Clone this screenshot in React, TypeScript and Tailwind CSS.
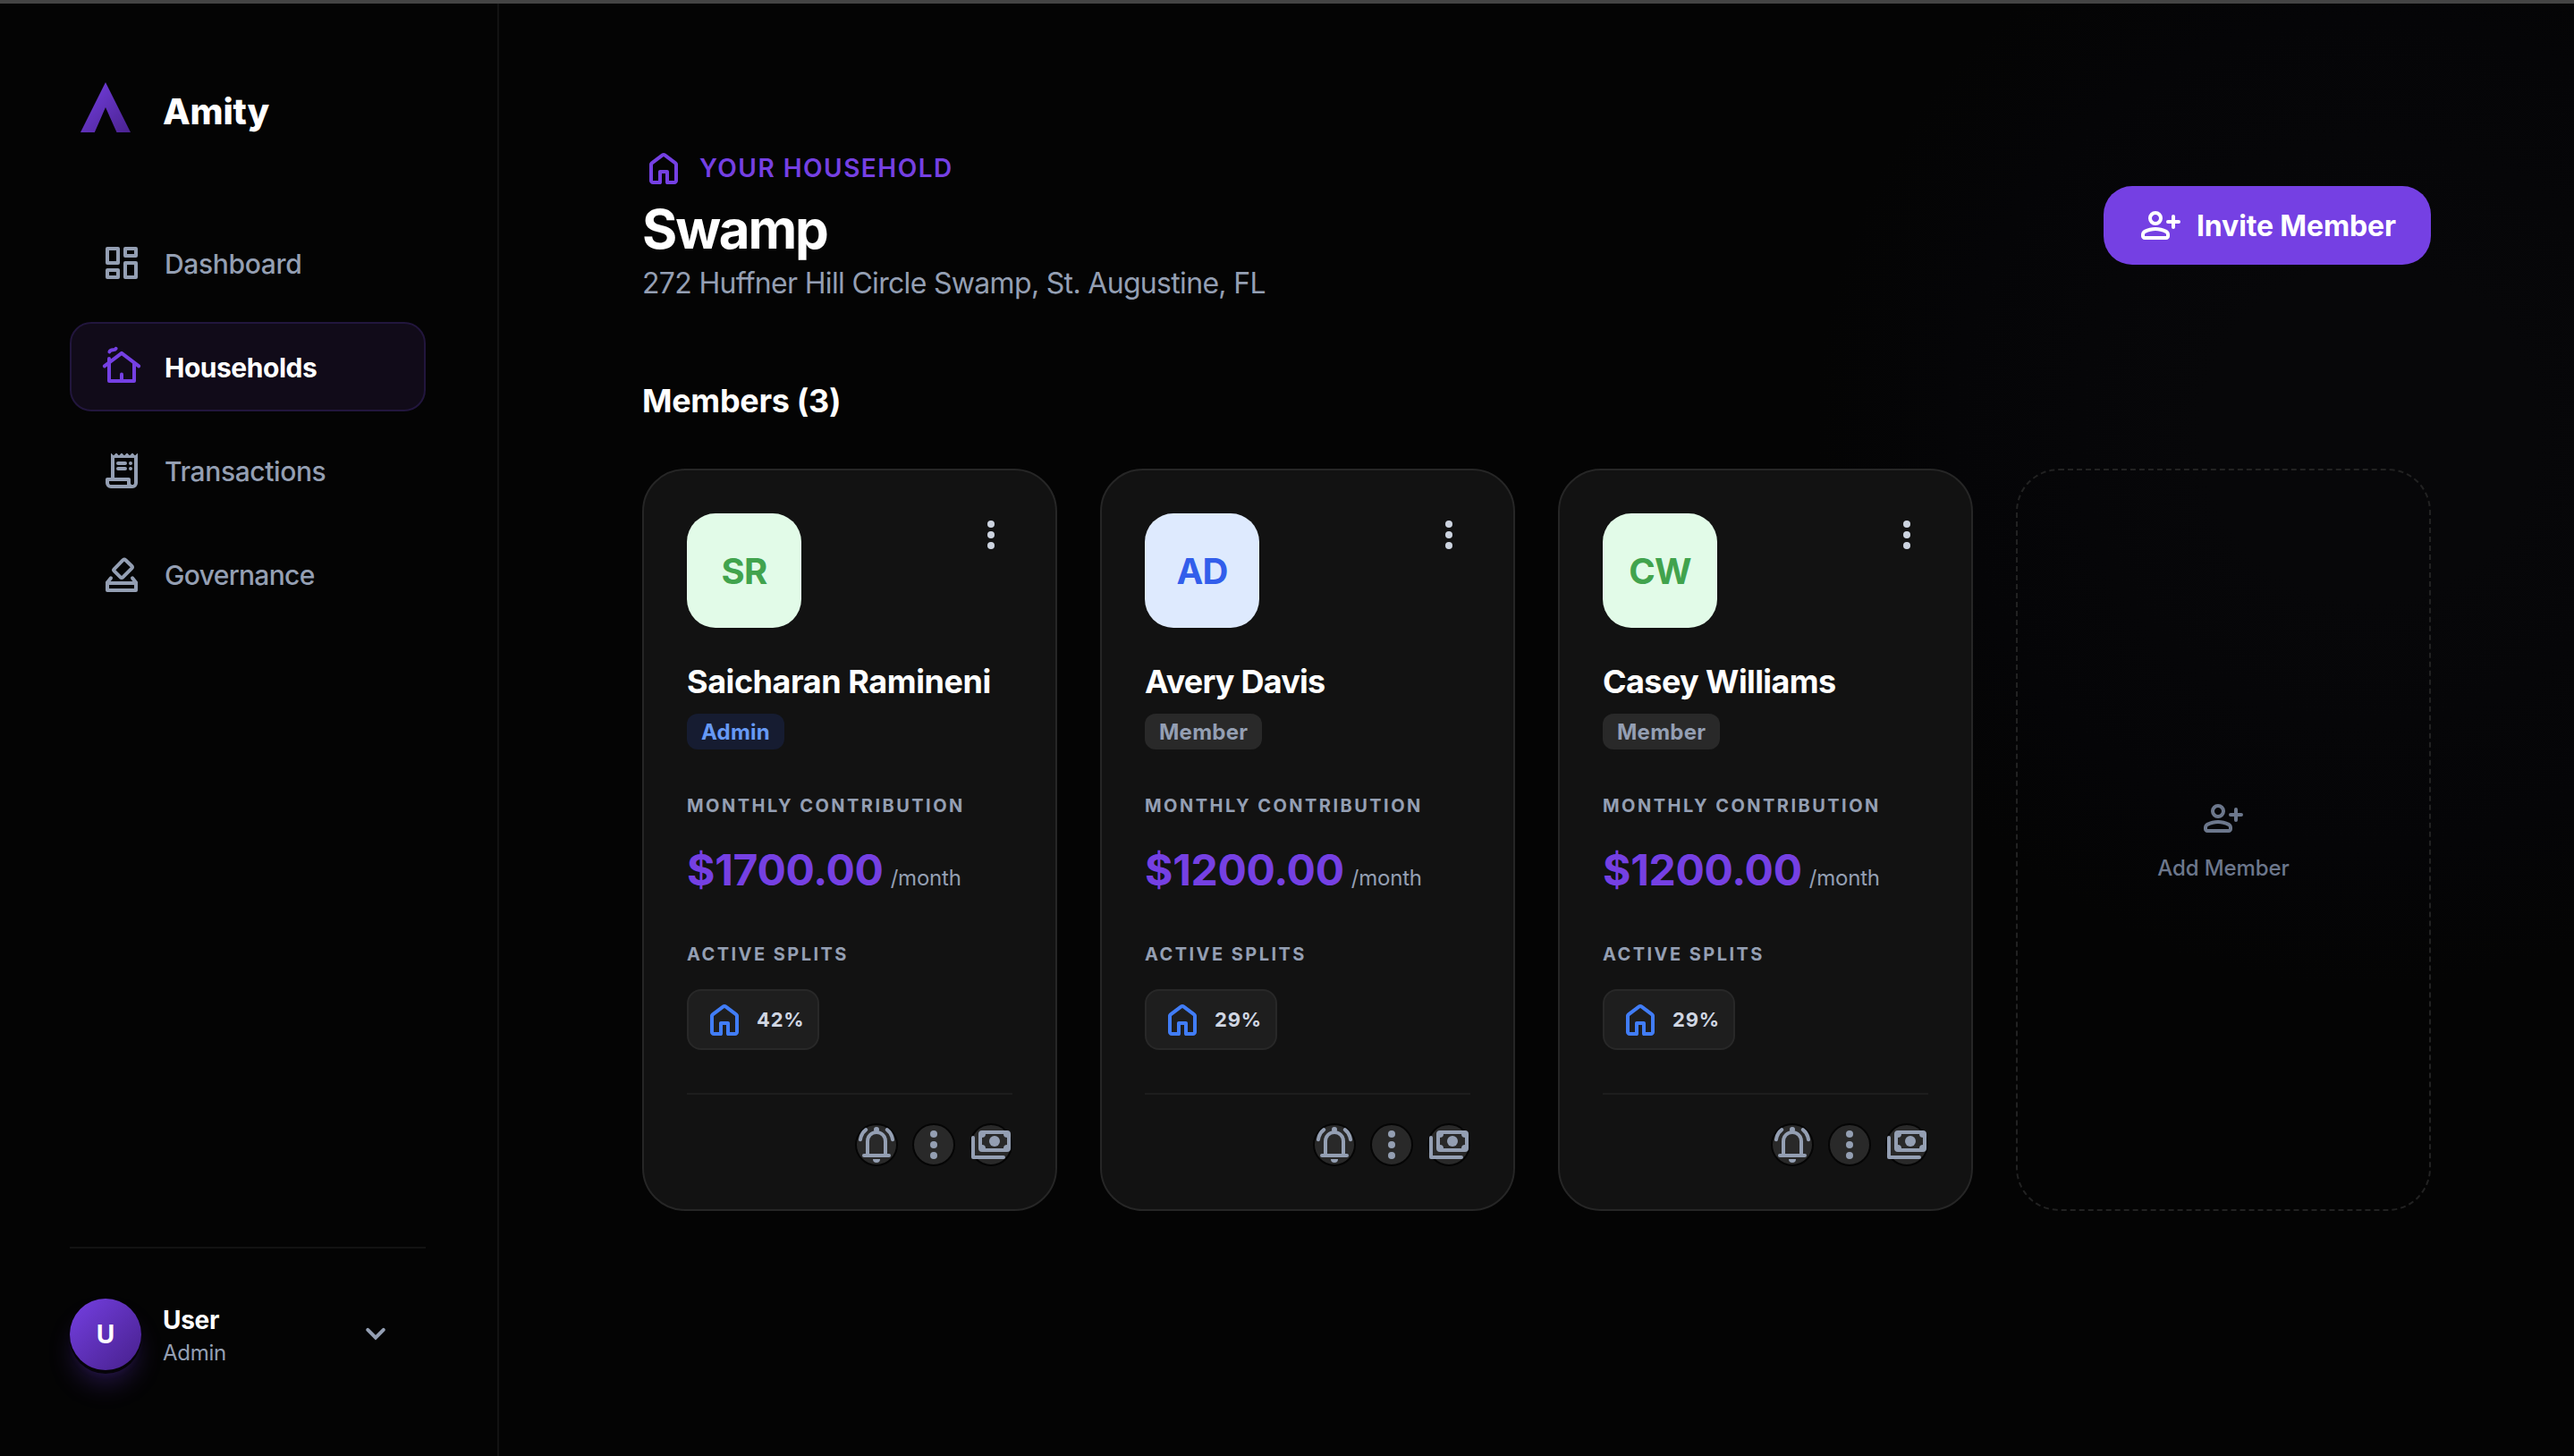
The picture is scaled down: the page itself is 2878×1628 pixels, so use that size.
import type { ReactNode } from "react";

function Icon({ children, className = "" }: { children: ReactNode; className?: string }) {
  return (
    <svg
      viewBox="0 0 24 24"
      fill="none"
      stroke="currentColor"
      strokeWidth="2"
      strokeLinecap="round"
      strokeLinejoin="round"
      className={`size-12 shrink-0 overflow-visible ${className}`}
    >
      {children}
    </svg>
  );
}

const DashboardIcon = () => (
  <Icon>
    <rect x="4" y="4" width="6" height="8" />
    <rect x="14" y="4" width="6" height="4" />
    <rect x="4" y="16" width="6" height="4" />
    <rect x="14" y="12" width="6" height="8" />
  </Icon>
);

const CottageIcon = () => (
  <Icon>
    <path d="M2.4 11.7 12 4.4l9.6 7.3" />
    <path d="M5 7.5V20h14v-9.6" />
    <path d="M12 16.3V20" />
    <path d="M5.2 3.7C5.9 1.9 8.1 3.3 8.8 1.9" />
  </Icon>
);

const ReceiptIcon = () => (
  <Icon>
    <path
      fill="currentColor"
      stroke="none"
      d="M6 22q-1.25 0-2.125-.875T3 19v-2q0-.425.288-.713T4 16h2V2.6q0-.3.25-.15l.9.9q.35.3.7 0l.8-.8q.35-.3.7 0l.8.8q.35.3.7 0l.8-.8q.35-.3.7 0l.8.8q.35.3.7 0l.8-.8q.35-.3.7 0l.8.8q.35.3.7 0l.8-.8q.35-.3.7 0l.8.8q.35.3.7 0l.9-.9q.25-.15.25.15V19q0 1.25-.875 2.125T18 22H6Zm12-2q.425 0 .713-.288T19 19V5H8v11h8q.425 0 .713.288T17 17v2q0 .425.288.713T18 20ZM6 20h9v-2H5v1q0 .425.288.713T6 20Z"
    />
    <path d="M10 8h4M10 11h4" />
    <path d="M17 8h.01M17 11h.01" />
  </Icon>
);

const VoteIcon = () => (
  <Icon>
    <path d="M6 14.2 4 16.6V21h16v-4.4l-2-2.4" />
    <path d="M4 17h16" />
    <path d="m12.8 4.1-5 5.1q-.5.5 0 1l3.5 3.5q.7.6 1.4 0l5-5q.6-.6 0-1.2l-3.5-3.4q-.7-.6-1.4 0Z" />
  </Icon>
);

const HomeIcon = ({ className }: { className: string }) => (
  <Icon className={className}>
    <path
      fill="currentColor"
      stroke="none"
      d="M6 19h3v-5q0-.425.288-.713T10 13h4q.425 0 .713.288T15 14v5h3v-9l-6-4.5L6 10v9Zm-2 0v-9q0-.475.213-.9t.587-.7l6-4.5q.525-.4 1.2-.4t1.2.4l6 4.5q.375.275.588.7T20 10v9q0 .825-.588 1.413T18 21h-4q-.425 0-.713-.288T13 20v-5h-2v5q0 .425-.288.713T10 21H6q-.825 0-1.413-.588T4 19Z"
    />
  </Icon>
);

const PersonAddIcon = () => (
  <Icon>
    <path
      fill="currentColor"
      stroke="none"
      d="M9 12q-1.65 0-2.825-1.175T5 8t1.175-2.825T9 4t2.825 1.175T13 8t-1.175 2.825T9 12Zm-8 6v-.8q0-.85.438-1.562T2.6 14.55q1.55-.775 3.15-1.162T9 13q1.65 0 3.25.388t3.15 1.162q.725.375 1.163 1.088T17 17.2v.8q0 .825-.587 1.413T15 20H3q-.825 0-1.412-.587T1 18Zm2 0h12v-.8q0-.275-.137-.5t-.363-.35q-1.35-.675-2.725-1.012T9 15q-1.4 0-2.775.338T3.5 16.35q-.225.125-.363.35T3 17.2v.8Zm6-8q.825 0 1.413-.587T11 8q0-.825-.587-1.412T9 6q-.825 0-1.412.588T7 8q0 .825.588 1.413T9 10Z"
    />
    <path d="M19 7v6M16 10h6" />
  </Icon>
);

const MoreIcon = ({ className = "" }: { className?: string }) => (
  <Icon className={className}>
    <g fill="currentColor" stroke="none">
      <circle cx="12" cy="6" r="2" />
      <circle cx="12" cy="12" r="2" />
      <circle cx="12" cy="18" r="2" />
    </g>
  </Icon>
);

const BellIcon = () => (
  <Icon>
    <path d="M6.1 3.6Q3.5 5.6 3 9.1M17.9 3.6q2.6 2 3.1 5.5" />
    <path d="M7 18v-8a5 5 0 0 1 10 0v8" />
    <path d="M5 18h14" />
    <path fill="currentColor" stroke="none" d="M10 20h4a2 2 0 0 1-4 0Z" />
    <circle cx="12" cy="3.5" r="1.5" fill="currentColor" stroke="none" />
  </Icon>
);

const PaymentsIcon = () => (
  <Icon>
    <path
      fill="currentColor"
      stroke="none"
      fillRule="evenodd"
      d="M7 4h14q2 0 2 2v8q0 2-2 2H7q-2 0-2-2V6q0-2 2-2Zm2 2a2 2 0 0 1-2 2v4a2 2 0 0 1 2 2h10a2 2 0 0 1 2-2V8a2 2 0 0 1-2-2H9Z"
    />
    <circle cx="14" cy="10" r="3" fill="currentColor" stroke="none" />
    <path d="M2 8v11h17" />
  </Icon>
);

function Logo() {
  return (
    <svg viewBox="0 0 80 80" className="size-20 shrink-0">
      <defs>
        <linearGradient id="logo" x1="12" y1="12" x2="68" y2="68" gradientUnits="userSpaceOnUse">
          <stop stopColor="#7540e3" />
          <stop offset="1" stopColor="#4a228f" />
        </linearGradient>
      </defs>
      <path d="M40 12 68 68H52.5L40 40 27.8 68H12Z" fill="url(#logo)" />
    </svg>
  );
}

const nav = [
  { label: "Dashboard", icon: <DashboardIcon />, tracking: "tracking-[-0.011em]" },
  { label: "Households", icon: <CottageIcon />, tracking: "tracking-[-0.016em]", active: true },
  { label: "Transactions", icon: <ReceiptIcon />, tracking: "tracking-[-0.013em]" },
  { label: "Governance", icon: <VoteIcon />, tracking: "tracking-[-0.022em]" },
];

function Sidebar() {
  return (
    <aside className="flex w-[558px] shrink-0 flex-col border-r-2 border-[#121212] pt-[76px] pr-20 pb-24 pl-[78px]">
      <div className="flex items-center gap-6">
        <Logo />
        <span className="pt-[9px] text-[40px] leading-[60px] font-extrabold tracking-[-0.005em] text-white">Amity</span>
      </div>
      <nav className="mt-[84px] flex flex-col gap-4">
        {nav.map((item) => (
          <a
            key={item.label}
            className={`flex h-[100px] items-center gap-6 rounded-[24px] border-2 px-8 text-[30px] leading-[44px] ${
              item.active
                ? "border-[#22163d] bg-[#110b19] font-bold text-white"
                : "border-transparent font-medium text-[#949fb3]"
            }`}
          >
            <span className={item.active ? "text-[#7540e3]" : "text-[#949fb3]"}>{item.icon}</span>
            <span className={`pt-0.5 ${item.tracking}`}>{item.label}</span>
          </a>
        ))}
      </nav>
      <div className="mt-auto flex items-center gap-6 border-t-2 border-[#121212] pt-14">
        <div className="flex size-20 items-center justify-center rounded-full bg-linear-to-br from-[#7540e3] to-[#47208c] text-[28px] font-bold text-white shadow-[0_4px_0_0_#060409,0_20px_30px_-6px_rgba(117,64,227,0.3),0_8px_12px_-8px_rgba(117,64,227,0.3)]">
          U
        </div>
        <div className="flex-1">
          <div className="text-[28px] leading-10 font-bold tracking-[-0.01em] text-white">User</div>
          <div className="pt-px text-[24px] leading-[31px] tracking-[-0.011em] text-[#949fb3]">Admin</div>
        </div>
        <Icon className="mr-8 text-[#949fb3]">
          <path strokeLinejoin="miter" d="M7.6 9.4 12 13.8l4.4-4.4" />
        </Icon>
      </div>
    </aside>
  );
}

type Member = {
  initials: string;
  name: string;
  nameTracking: string;
  role: string;
  amount: string;
  split: string;
  avatar: string;
  badge: string;
};

const blueBadge = "bg-[#161c31] text-[#6699f5]";
const grayBadge = "bg-[#292929] text-[#949fb3]";
const greenAvatar = "bg-[#e2fbe8] text-[#41a34d]";

const members: Member[] = [
  { initials: "SR", name: "Saicharan Ramineni", nameTracking: "tracking-[-0.0124em]", role: "Admin", amount: "$1700.00", split: "42%", avatar: greenAvatar, badge: blueBadge },
  { initials: "AD", name: "Avery Davis", nameTracking: "tracking-[-0.022em]", role: "Member", amount: "$1200.00", split: "29%", avatar: "bg-[#deeafe] text-[#325eeb]", badge: grayBadge },
  { initials: "CW", name: "Casey Williams", nameTracking: "tracking-[-0.0165em]", role: "Member", amount: "$1200.00", split: "29%", avatar: greenAvatar, badge: grayBadge },
];

function ActionButton({ children }: { children: ReactNode }) {
  return (
    <button className="flex size-12 items-center justify-center rounded-full border-2 border-[#050505] bg-[#292929] text-[#949fb3]">
      {children}
    </button>
  );
}

function MemberCard({ m }: { m: Member }) {
  return (
    <article className="rounded-[48px] border-2 border-[#262626] bg-[#121212] p-12">
      <div className="flex items-start justify-between">
        <div className={`flex size-32 items-center justify-center rounded-[32px] pt-px text-[40px] font-bold tracking-[-0.02em] ${m.avatar}`}>
          {m.initials}
        </div>
        <MoreIcon className="text-[#cdd4e0]" />
      </div>
      <h3 className={`mt-8 text-[36px] leading-[56px] font-bold whitespace-nowrap text-white ${m.nameTracking}`}>{m.name}</h3>
      <div className={`mt-2 flex h-10 w-fit items-center rounded-xl px-4 pt-px text-[24px] leading-9 font-bold tracking-[0.01em] ${m.badge}`}>
        {m.role}
      </div>
      <div className="mt-12 text-[20px] leading-[30px] font-bold tracking-[0.123em] text-[#949fb3]">MONTHLY CONTRIBUTION</div>
      <div className="mt-[21px] flex h-[71px] items-baseline gap-2 leading-[72px]">
        <span className="text-[48px] font-bold tracking-[-0.006em] text-[#7540e3]">{m.amount}</span>
        <span className="text-[24px] leading-none tracking-[-0.009em] text-[#949fb3]">/month</span>
      </div>
      <div className="mt-11 text-[20px] leading-[30px] font-bold tracking-[0.122em] text-[#949fb3]">ACTIVE SPLITS</div>
      <div className="mt-6 flex h-[68px] w-[148px] items-center gap-3 rounded-2xl border-2 border-[#282828] bg-[#1e1e1e] pl-4">
        <HomeIcon className="text-[#417df7]" />
        <span className="text-[22px] font-bold tracking-[0.035em] text-[#d0d6e2]">{m.split}</span>
      </div>
      <div className="mt-12 flex justify-end gap-4 border-t-2 border-[#1d1d1d] pt-8">
        <ActionButton>
          <BellIcon />
        </ActionButton>
        <ActionButton>
          <MoreIcon />
        </ActionButton>
        <ActionButton>
          <PaymentsIcon />
        </ActionButton>
      </div>
    </article>
  );
}

export default function App() {
  return (
    <div className="flex h-[1628px] w-[2878px] overflow-hidden border-t-4 border-[#444444] bg-[#040404] font-[Inter,sans-serif]">
      <Sidebar />
      <main className="flex-1 bg-[radial-gradient(circle_620px_at_2090px_480px,#070709_0%,#070709_30%,#050507_75%,#040404_100%)] px-40 pt-40">
        <header className="flex items-center justify-between">
          <div>
            <div className="flex items-center gap-4">
              <HomeIcon className="text-[#7540e3]" />
              <span className="text-[28px] leading-10 font-semibold tracking-[0.053em] text-[#7540e3]">YOUR HOUSEHOLD</span>
            </div>
            <h1 className="mt-2 text-[60px] leading-[72px] font-bold tracking-[-0.036em] text-white">Swamp</h1>
            <p className="pt-px text-[32px] leading-[47px] tracking-[-0.0212em] text-[#949fb3]">
              272 Huffner Hill Circle Swamp, St. Augustine, FL
            </p>
          </div>
          <button className="flex h-[88px] w-[366px] items-center gap-4 rounded-[32px] bg-[#7540e3] pl-10 text-[32px] font-bold tracking-[-0.004em] whitespace-nowrap text-white">
            <PersonAddIcon />
            <span className="pt-px">Invite Member</span>
          </button>
        </header>
        <h2 className="mt-20 text-[36px] leading-[56px] font-bold tracking-[-0.0087em] text-white">Members (3)</h2>
        <section className="mt-12 grid grid-cols-4 gap-12">
          {members.map((m) => (
            <MemberCard key={m.initials} m={m} />
          ))}
          <button className="flex flex-col items-center justify-center gap-3 rounded-[48px] border-2 border-dashed border-[#222222] text-[#6c778c]">
            <PersonAddIcon />
            <span className="pt-1 text-[24px] leading-8 font-medium tracking-[-0.004em]">Add Member</span>
          </button>
        </section>
      </main>
    </div>
  );
}
